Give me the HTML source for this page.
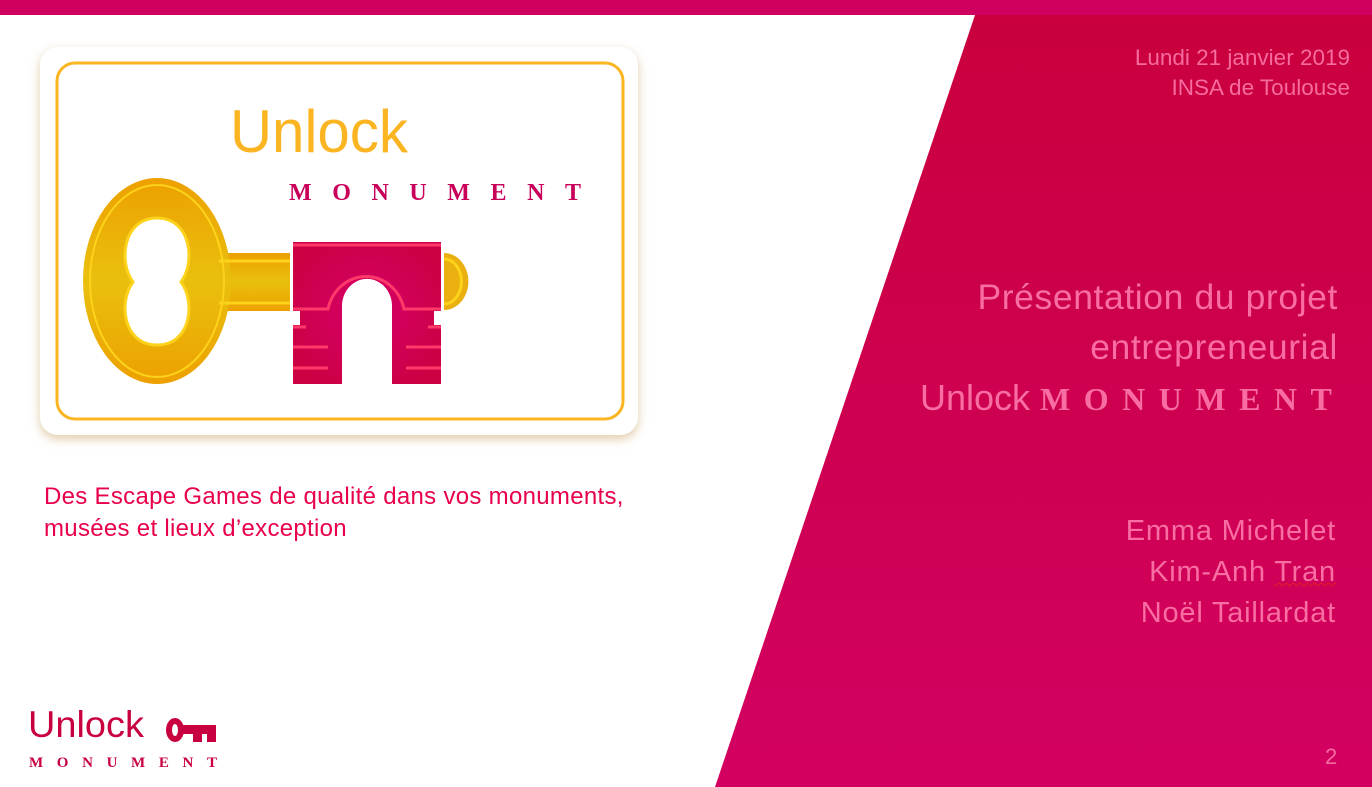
<!DOCTYPE html>
<html><head><meta charset="utf-8"><style>
html,body{margin:0;padding:0}
body{width:1372px;height:787px;position:relative;overflow:hidden;background:#fff;font-family:"Liberation Sans",sans-serif}
.t{position:absolute;white-space:nowrap;color:#f86ea2}
.r{text-align:right;right:0}
.serif{font-family:"Liberation Serif",serif}
</style></head><body>
<svg width="1372" height="787" style="position:absolute;left:0;top:0">
<defs>
<linearGradient id="pg" x1="0" y1="0" x2="0" y2="1"><stop offset="0" stop-color="#c9003d"/><stop offset="1" stop-color="#d30062"/></linearGradient>
<linearGradient id="gold" x1="0" y1="0" x2="0" y2="1"><stop offset="0" stop-color="#eda000"/><stop offset="0.5" stop-color="#e9c00e"/><stop offset="1" stop-color="#eda000"/></linearGradient>
<radialGradient id="arch" cx="0.5" cy="0.5" r="0.6"><stop offset="0" stop-color="#d5006a"/><stop offset="1" stop-color="#cc0042"/></radialGradient>
<filter id="sh" x="-10%" y="-10%" width="120%" height="130%"><feDropShadow dx="0" dy="4" stdDeviation="5" flood-color="#c8a060" flood-opacity="0.55"/></filter>
</defs>
<rect x="0" y="0" width="1372" height="15" fill="#cf0060"/>
<polygon points="975,15 1372,15 1372,787 715,787" fill="url(#pg)"/>
<rect x="40" y="47" width="598" height="388" rx="18" fill="#fff" filter="url(#sh)"/>
<rect x="57" y="63" width="566" height="356" rx="18" fill="none" stroke="#fbb522" stroke-width="3"/>
<text x="230" y="152" font-family="Liberation Sans" font-size="60" fill="#fbb522" style="font-weight:100" textLength="178" lengthAdjust="spacingAndGlyphs">Unlock</text>
<text x="289" y="200" font-family="Liberation Serif" font-size="24" font-weight="bold" fill="#c8005a" textLength="292" lengthAdjust="spacing">MONUMENT</text>
<path d="M222,253 L290,253 L290,311 L222,311 Z" fill="url(#gold)"/>
<ellipse cx="157" cy="281" rx="74" ry="103" fill="url(#gold)"/>
<ellipse cx="157" cy="281" rx="67" ry="96" fill="none" stroke="#fdd21a" stroke-width="2"/>
<path d="M219,261 L290,261 M219,303 L290,303" stroke="#fdd21a" stroke-width="3"/>
<path d="M133,282 C118,262 123,218 157,218 C191,218 196,262 181,282 C196,302 191,345 157,345 C123,345 118,302 133,282 Z" fill="#fff" stroke="#fdd21a" stroke-width="3"/>
<path d="M444,253 A24,28 0 0 1 444,310 Z" fill="#eab010"/>
<path d="M444,259 A17,22 0 0 1 444,304" fill="none" stroke="#fdd21a" stroke-width="3"/>
<path d="M293,242 L441,242 L441,311 L434,311 L434,325 L441,325 L441,384 L392,384 L392,306 A24,26 0 0 0 342,306 L342,384 L293,384 L293,325 L300,325 L300,311 L293,311 Z" fill="url(#arch)"/>
<path d="M293,245 L441,245" stroke="#ff3a6a" stroke-width="3"/>
<path d="M293,309 L328,309 A39,42 0 0 1 404,309 L441,309" fill="none" stroke="#ff3a6a" stroke-width="3"/>
<path d="M293,327 L306,327 M428,327 L441,327 M293,347 L328,347 M406,347 L441,347 M293,368 L328,368 M406,368 L441,368" stroke="#ff3a6a" stroke-width="3"/>
<text x="28" y="737" font-family="Liberation Sans" font-size="37" fill="#c8003f" style="font-weight:100" textLength="116" lengthAdjust="spacingAndGlyphs">Unlock</text>
<text x="29" y="767" font-family="Liberation Serif" font-size="15" font-weight="bold" fill="#c8003f" textLength="188" lengthAdjust="spacing">MONUMENT</text>
<g fill="#c8003f">
<ellipse cx="175" cy="730" rx="9" ry="12"/>
<rect x="180" y="725" width="36" height="9"/>
<rect x="193" y="725" width="9" height="17"/><rect x="207" y="725" width="9" height="17"/>
</g>
<ellipse cx="175" cy="730" rx="3" ry="6" fill="#fff"/>
</svg>
<div class="t" style="left:44px;top:481px;font-size:24px;line-height:32px;letter-spacing:0.3px;color:#e8004a">Des Escape Games de qualité dans vos monuments,<br>musées et lieux d’exception</div>
<div class="t r" style="right:22px;top:43px;font-size:22.5px;line-height:30px;text-align:right;color:#f76c9f">Lundi 21 janvier 2019<br>INSA de Toulouse</div>
<div class="t r" style="right:34px;top:272px;font-size:35.5px;line-height:50px;text-align:right;letter-spacing:0.6px">Présentation du projet<br>entrepreneurial</div>
<div class="t" style="left:920px;top:374px;font-size:36px;line-height:48px">Unlock <span class="serif" style="font-size:32px;font-weight:bold;letter-spacing:13.5px">MONUMENT</span></div>
<div class="t r" style="right:36px;top:511px;font-size:29px;line-height:41px;text-align:right;letter-spacing:0.8px">Emma Michelet<br>Kim-Anh <span style="text-decoration:underline wavy #e02020;text-decoration-thickness:1px">Tran</span><br>Noël Taillardat</div>
<div class="t" style="left:1325px;top:744px;font-size:22px;color:#f76c9f">2</div>
</body></html>
